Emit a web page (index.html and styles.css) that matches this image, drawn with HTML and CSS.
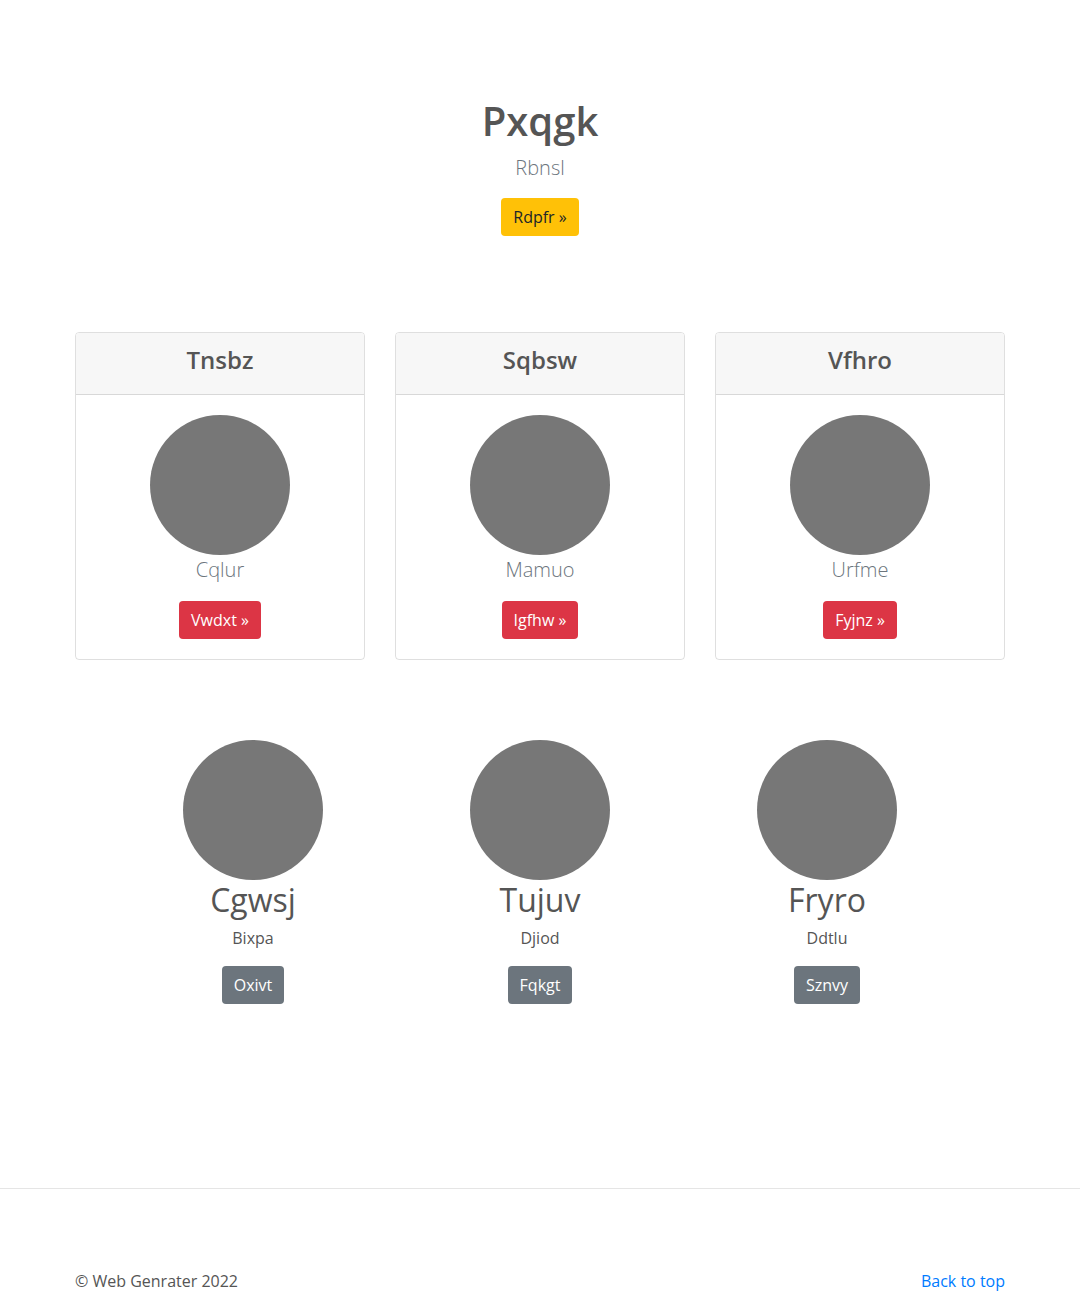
FILE: index.html
```html
<!DOCTYPE html>
<html lang="en">
<head>
<meta charset="utf-8">
<title>Pxqgk</title>
<link rel="stylesheet" href="styles.css">
</head>
<body>
<main>
  <section class="hero">
    <h1 class="hero-title">Pxqgk</h1>
    <p class="lead muted hero-lead">Rbnsl</p>
    <a class="btn btn-warning" href="#">Rdpfr &raquo;</a>
  </section>

  <section class="container cards">
    <div class="card">
      <div class="card-header"><h4 class="card-title">Tnsbz</h4></div>
      <div class="card-body">
        <div class="circle"></div>
        <p class="lead muted">Cqlur</p>
        <a class="btn btn-danger" href="#">Vwdxt &raquo;</a>
      </div>
    </div>
    <div class="card">
      <div class="card-header"><h4 class="card-title">Sqbsw</h4></div>
      <div class="card-body">
        <div class="circle"></div>
        <p class="lead muted">Mamuo</p>
        <a class="btn btn-danger" href="#">Igfhw &raquo;</a>
      </div>
    </div>
    <div class="card">
      <div class="card-header"><h4 class="card-title">Vfhro</h4></div>
      <div class="card-body">
        <div class="circle"></div>
        <p class="lead muted">Urfme</p>
        <a class="btn btn-danger" href="#">Fyjnz &raquo;</a>
      </div>
    </div>
  </section>

  <section class="people">
    <div class="person">
      <div class="circle"></div>
      <h2 class="person-name">Cgwsj</h2>
      <p class="person-text">Bixpa</p>
      <a class="btn btn-secondary" href="#">Oxivt</a>
    </div>
    <div class="person">
      <div class="circle"></div>
      <h2 class="person-name">Tujuv</h2>
      <p class="person-text">Djiod</p>
      <a class="btn btn-secondary" href="#">Fqkgt</a>
    </div>
    <div class="person">
      <div class="circle"></div>
      <h2 class="person-name">Fryro</h2>
      <p class="person-text">Ddtlu</p>
      <a class="btn btn-secondary" href="#">Sznvy</a>
    </div>
  </section>
</main>

<footer class="footer">
  <div class="container footer-inner">
    <p class="copy">&copy; Web Genrater 2022</p>
    <a class="top-link" href="#">Back to top</a>
  </div>
</footer>
</body>
</html>
```

FILE: styles.css
```css
* { box-sizing: border-box; }

html, body {
  margin: 0;
  padding: 0;
}

body {
  font-family: "Open Sans", "Noto Sans", sans-serif;
  font-size: 16px;
  line-height: 1.5;
  color: #555;
  background: #fff;
}

p { margin: 0 0 16px; }

.container {
  width: 930px;
  margin: 0 auto;
}

.hero {
  text-align: center;
  padding-top: 97px;
}

.hero-title {
  font-size: 40px;
  font-weight: 600;
  line-height: 1.2;
  margin: 0 0 8px;
  color: #555;
}

.hero-lead { margin-bottom: 15px; }

.lead {
  font-size: 20px;
  font-weight: 300;
  line-height: 30px;
}

.muted { color: #6c757d; }

.btn {
  display: inline-block;
  font-size: 16px;
  line-height: 24px;
  padding: 7px 12px;
  border-radius: 4px;
  text-decoration: none;
  font-weight: 400;
}

.btn-warning { background: #ffc107; color: #212529; }
.btn-danger { background: #dc3545; color: #fff; }
.btn-secondary { background: #6c757d; color: #fff; }

.cards {
  margin-top: 96px;
  display: grid;
  grid-template-columns: repeat(3, 1fr);
  column-gap: 30px;
}

.card {
  border: 1px solid rgba(0,0,0,.125);
  border-radius: 4px;
  text-align: center;
  overflow: hidden;
}

.card-header {
  background: #f7f7f7;
  border-bottom: 1px solid rgba(0,0,0,.125);
  padding: 12px 20px;
}

.card-title {
  font-size: 24px;
  font-weight: 600;
  line-height: 29px;
  margin: 0 0 8px;
  color: #555;
}

.card-body {
  padding: 20px;
}

.card-body .lead { margin-bottom: 16px; }

.circle {
  width: 140px;
  height: 140px;
  border-radius: 50%;
  background: #777;
  margin: 0 auto;
}

.people {
  width: 861px;
  margin: 80px auto 0;
  display: grid;
  grid-template-columns: repeat(3, 1fr);
  text-align: center;
}

.person-name {
  font-size: 32px;
  font-weight: 400;
  line-height: 38px;
  margin: 1px 0 7px;
  color: #555;
}

.person-text {
  margin-bottom: 16px;
  font-size: 16px;
}

.footer {
  margin-top: 184px;
  border-top: 1px solid #e5e5e5;
  padding-top: 80px;
  padding-bottom: 48px;
}

.footer-inner {
  display: flex;
  justify-content: space-between;
  align-items: baseline;
}

.copy {
  margin: 0;
  color: #555;
}

.top-link {
  color: #007bff;
  text-decoration: none;
}
```
